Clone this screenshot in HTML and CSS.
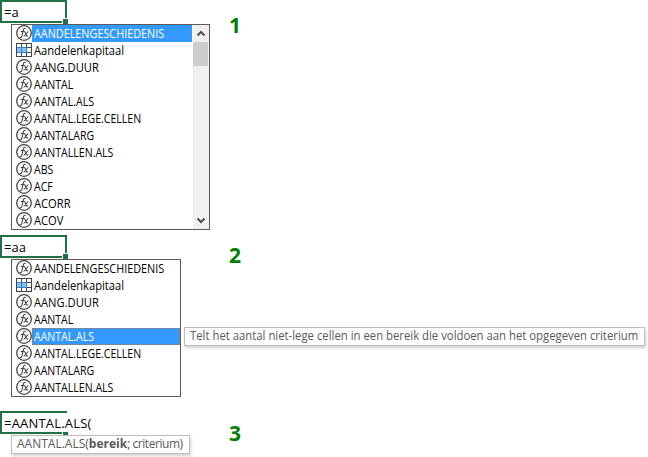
FILE: index.html
```
<!DOCTYPE html>
<html lang="nl">
<head>
<meta charset="utf-8">
<title>Formule automatisch aanvullen</title>
<link rel="stylesheet" href="styles.css">
</head>
<body>
<svg class="defs" aria-hidden="true">
  <symbol id="fx" viewBox="0 0 16 16">
    <circle cx="8" cy="8" r="7.3" fill="#fff" stroke="#444" stroke-width="1.3"/>
    <path d="M9.6 3.5C8.2 2.7 7.5 4 7.1 5.8L5.9 11C5.6 12.5 4.8 13.1 3.6 12.5M4.7 6.5h4" fill="none" stroke="#444" stroke-width="1.1"/>
    <path d="M8.2 7.1C9.7 6.1 9.8 11.2 11 11.2c.5 0 .8-.3 1-.7M12.4 6.8C10.9 6.3 9.5 11.8 7.6 11" fill="none" stroke="#444" stroke-width="1.1"/>
  </symbol>
  <symbol id="table" viewBox="0 0 16 14">
    <path d="M0 0h16v14H0z" fill="#444"/>
    <path d="M1 1h4v3H1zM6 1h4v3H6zM11 1h4v3h-4zM11 5h4v4h-4zM1 10h4v3H1zM6 10h4v3H6zM11 10h4v3h-4z" fill="#fff"/>
    <path d="M1 4h10v6H1z" fill="#2f83cf"/>
    <path d="M1 5h4v4H1zM6 5h4v4H6z" fill="#83c0f3"/>
  </symbol>
</svg>
<main>
  <section class="stage first">
    <div class="cell">=a<i class="handle"></i></div>
    <div class="list scrollable">
      <ul>
        <li class="selected"><svg><use href="#fx"/></svg><span><em class="long">AANDELENGESCHIEDENIS</em></span></li>
        <li><svg class="tbl"><use href="#table"/></svg><span><em class="lower">Aandelenkapitaal</em></span></li>
        <li><svg><use href="#fx"/></svg><span><em class="wide">AANG.DUUR</em></span></li>
        <li><svg><use href="#fx"/></svg><span><em>AANTAL</em></span></li>
        <li><svg><use href="#fx"/></svg><span><em>AANTAL.ALS</em></span></li>
        <li><svg><use href="#fx"/></svg><span><em>AANTAL.LEGE.CELLEN</em></span></li>
        <li><svg><use href="#fx"/></svg><span><em>AANTALARG</em></span></li>
        <li><svg><use href="#fx"/></svg><span><em>AANTALLEN.ALS</em></span></li>
        <li><svg><use href="#fx"/></svg><span><em>ABS</em></span></li>
        <li><svg><use href="#fx"/></svg><span><em>ACF</em></span></li>
        <li><svg><use href="#fx"/></svg><span><em class="wide">ACORR</em></span></li>
        <li><svg><use href="#fx"/></svg><span><em class="wide">ACOV</em></span></li>
      </ul>
      <div class="scrollbar">
        <svg viewBox="0 0 16 17"><path d="M4.5 10.5L8 7l3.5 3.5" /></svg>
        <div class="thumb"></div>
        <svg class="down" viewBox="0 0 16 17"><path d="M4.5 6.5L8 10l3.5-3.5"/></svg>
      </div>
    </div>
    <b class="number one">1</b>
  </section>
  <section class="stage second">
    <div class="cell">=aa<i class="handle"></i></div>
    <div class="list">
      <ul>
        <li><svg><use href="#fx"/></svg><span><em class="long">AANDELENGESCHIEDENIS</em></span></li>
        <li><svg class="tbl"><use href="#table"/></svg><span><em class="lower">Aandelenkapitaal</em></span></li>
        <li><svg><use href="#fx"/></svg><span><em class="wide">AANG.DUUR</em></span></li>
        <li><svg><use href="#fx"/></svg><span><em>AANTAL</em></span></li>
        <li class="selected focus"><svg><use href="#fx"/></svg><span><em>AANTAL.ALS</em></span></li>
        <li><svg><use href="#fx"/></svg><span><em>AANTAL.LEGE.CELLEN</em></span></li>
        <li><svg><use href="#fx"/></svg><span><em>AANTALARG</em></span></li>
        <li><svg><use href="#fx"/></svg><span><em>AANTALLEN.ALS</em></span></li>
      </ul>
    </div>
    <div class="tip description"><em>Telt het aantal niet-lege cellen in een bereik die voldoen aan het opgegeven criterium</em></div>
    <b class="number two">2</b>
  </section>
  <section class="stage third">
    <div class="cell open"><i class="handle"></i><span>=AANTAL.ALS(</span></div>
    <div class="tip signature">AANTAL.ALS(<b>bereik</b><span>; criterium)</span></div>
    <b class="number three">3</b>
  </section>
</main>
</body>
</html>
```
FILE: styles.css
```
* { box-sizing: border-box; }
body {
  margin: 0;
  background: #fff;
  color: #000;
  font: 12px/17px "Open Sans", "Noto Sans", sans-serif;
  overflow: hidden;
}
.defs { position: absolute; width: 0; height: 0; }
main { width: 648px; height: 457px; display: flex; flex-direction: column; }
.stage { position: relative; flex: none; }
.first { height: 235px; }
.second { height: 176px; }
.third { height: 46px; }

.cell {
  position: relative;
  width: 67px;
  height: 23px;
  padding-left: 2px;
  border: 2px solid #217346;
  font-size: 13px;
  line-height: 21px;
  white-space: nowrap;
}
.cell.open { border-right: 0; letter-spacing: .2px; }
.open span { position: relative; }
.handle {
  position: absolute;
  right: -3px;
  bottom: -3px;
  width: 6px;
  height: 6px;
  background: #217346;
  border: solid #fff;
  border-width: 1px 0 0 1px;
}
.open .handle { right: -1px; height: 4px; }

.list {
  display: flex;
  width: 170px;
  margin: 1px 0 0 11px;
  border: 1px solid #5a5a5a;
  background: #fff;
}
.list.scrollable { width: 199px; }
ul { flex: 1; margin: 0; padding: 0; list-style: none; }
li { display: flex; height: 17px; padding-left: 4px; white-space: nowrap; }
li svg { flex: none; width: 16px; height: 16px; }
li .tbl { height: 14px; margin-top: 1px; }
li span { flex: 1; padding-left: 2px; line-height: 18px; }
em {
  display: inline-block;
  font-style: normal;
  transform: scaleX(.88);
  transform-origin: 0 50%;
}
em.wide { transform: scaleX(.93); }
em.lower { transform: scaleX(.93); }
em.long { transform: scaleX(.902); }
.selected span { background: #3399ff; color: #fff; }
.focus span { outline: 1px dotted #b0783f; outline-offset: -1px; }

.scrollbar {
  width: 17px;
  display: flex;
  flex-direction: column;
  border-left: 1px solid #fff;
  background: #f0f0f0;
}
.scrollbar svg { width: 16px; height: 17px; }
.scrollbar path { fill: none; stroke: #505050; stroke-width: 2; }
.thumb { height: 24px; margin-right: 1px; background: #cdcdcd; }
.scrollbar .down { margin-top: auto; }

.number {
  position: absolute;
  left: 229px;
  color: #008000;
  font-size: 21px;
  line-height: 29px;
}
.one { top: 11px; }
.two { top: 6px; }
.three { top: 8px; }

.tip {
  height: 19px;
  padding-left: 5px;
  border: 1px solid #bdbdbd;
  background: #fff;
  box-shadow: 1px 2px 3px rgba(0, 0, 0, .18);
  color: #595959;
  line-height: 15px;
  white-space: nowrap;
}
.description {
  position: absolute;
  left: 184px;
  top: 92px;
  width: 461px;
}
.description em { transform: scaleX(.944); }
.signature { width: 179px; margin: 1px 0 0 11px; }
.signature span { letter-spacing: -.45px; }
```
